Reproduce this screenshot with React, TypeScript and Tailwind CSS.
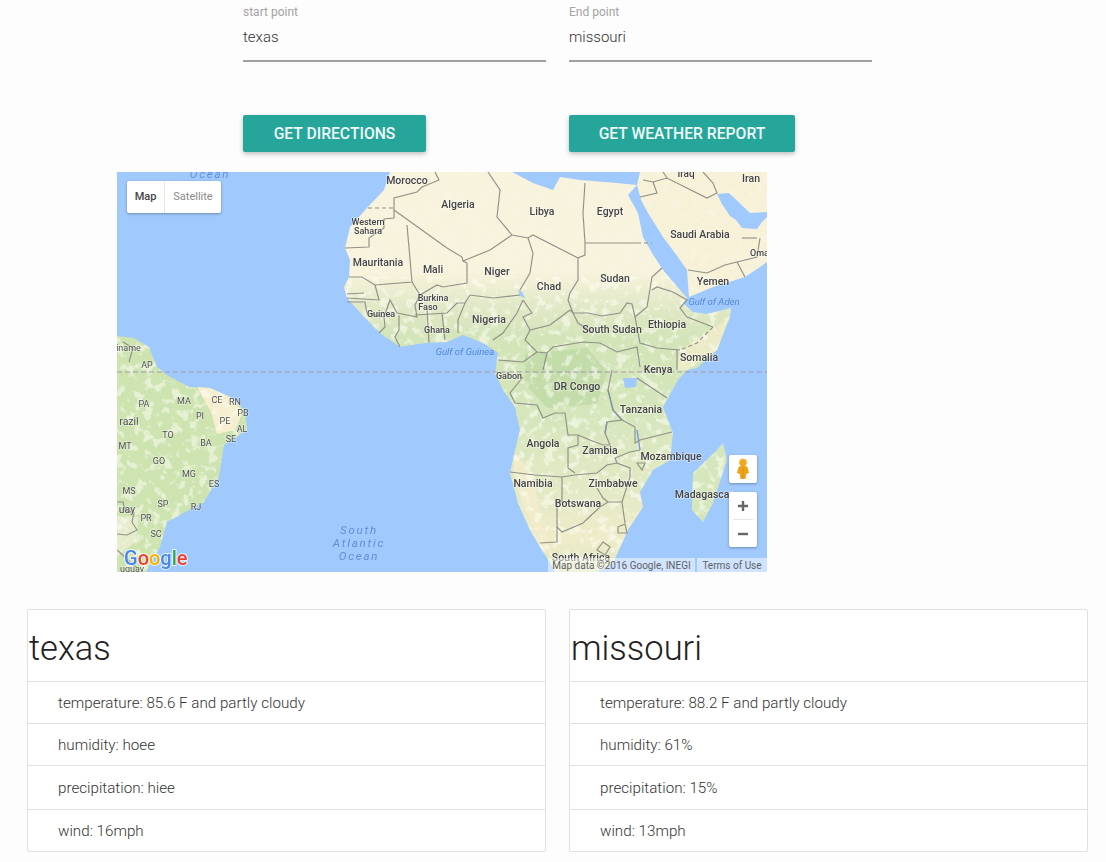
import React from 'react';

const FONT = "font-['Roboto','Liberation_Sans',sans-serif]";

type Place = [string, number, number, number?];

const AFRICA =
    'M273 0 L267 18 L250 36 L233 55 L228 76 L233 88 L232 105 L227 115 L230 126 L238 135 L250 148 L263 161 L283 175 L308 171 L330 170 L346 163 L366 171 L381 181 L378 201 L386 218 L398 235 L403 258 L398 278 L393 301 L401 331 L413 358 L423 375 L433 391 L438 400 L480 400 L496 391 L511 358 L526 335 L523 320 L536 298 L553 288 L556 261 L546 235 L561 208 L570 198 L580 196 L600 178 L613 145 L614 136 L590 142 L576 140 L566 131 L570 126 L546 98 L535 81 L526 65 L521 41 L511 23 L520 13 L500 11 L463 8 L443 5 L436 18 L416 11 L395 0 Z';
const ARABIA =
    'M523 0 L520 13 L524 28 L531 41 L546 65 L558 81 L570 98 L572 125 L596 115 L628 105 L643 95 L650 90 L650 0 Z';
const MADAGASCAR = 'M606 271 L610 288 L596 331 L586 350 L575 338 L576 301 L600 278 Z';
const BRAZIL =
    'M0 164 L17 166 L32 175 L40 195 L50 203 L72 215 L93 216 L113 225 L128 238 L130 258 L107 273 L102 305 L87 330 L50 350 L43 375 L30 398 L30 400 L0 400 Z';

const countries: Place[] = [
    ['Morocco', 290, 12, 10.5],
    ['Algeria', 341, 36, 10.5],
    ['Libya', 425, 43, 10.5],
    ['Egypt', 493, 43, 10.5],
    ['Iraq', 569, 5, 10],
    ['Iran', 634, 10, 10.5],
    ['Saudi Arabia', 583, 66, 10.5],
    ['Oman', 645, 84, 9],
    ['Western', 251, 53, 9],
    ['Sahara', 251, 62, 9],
    ['Mauritania', 261, 94, 10.5],
    ['Mali', 316, 101, 10.5],
    ['Niger', 380, 103, 10.5],
    ['Chad', 432, 118, 10.5],
    ['Sudan', 498, 110, 10.5],
    ['Yemen', 596, 113, 10.5],
    ['Burkina', 316, 129, 9],
    ['Faso', 311, 138, 9],
    ['Guinea', 264, 145, 9],
    ['Ghana', 320, 161, 9],
    ['Nigeria', 372, 151, 10.5],
    ['South Sudan', 495, 161, 10.5],
    ['Ethiopia', 550, 156, 10.5],
    ['Somalia', 582, 189, 10.5],
    ['Kenya', 541, 201, 10.5],
    ['Gabon', 392, 207, 9],
    ['DR Congo', 460, 218, 10.5],
    ['Tanzania', 524, 241, 10.5],
    ['Angola', 426, 275, 10.5],
    ['Zambia', 483, 282, 10.5],
    ['Mozambique', 554, 288, 10.5],
    ['Namibia', 416, 315, 10.5],
    ['Zimbabwe', 496, 315, 10.5],
    ['Madagascar', 587, 326, 10.5],
    ['Botswana', 461, 335, 10.5],
    ['South Africa', 464, 389, 10.5],
];

const brazil: Place[] = [
    ['riname', 10, 179, 9],
    ['AP', 30, 196, 9],
    ['PA', 27, 235, 9],
    ['MA', 67, 232, 9],
    ['CE', 100, 231, 9],
    ['RN', 118, 233, 9],
    ['PB', 126, 244, 9],
    ['PI', 83, 247, 9],
    ['PE', 108, 252, 9],
    ['AL', 125, 260, 9],
    ['razil', 12, 253, 10.5],
    ['TO', 51, 266, 9],
    ['BA', 89, 274, 9],
    ['SE', 114, 270, 9],
    ['MT', 8, 277, 9],
    ['GO', 42, 292, 9],
    ['MG', 72, 305, 9],
    ['ES', 97, 315, 9],
    ['MS', 12, 322, 9],
    ['SP', 46, 335, 9],
    ['RJ', 79, 338, 9],
    ['uay', 10, 341, 10.5],
    ['PR', 29, 349, 9],
    ['SC', 39, 365, 9],
    ['uguay', 15, 400, 9],
];

const borders = [
    // north west
    'M277 36 L277 46 L267 47 L267 56 L252 66 L252 75 L228 76',
    'M277 36 L277 26 L300 20 L305 15 L322 8 L318 0',
    'M277 38 L330 76 L345 85 L346 89 L373 78 L395 63',
    'M290 53 L295 110 L258 113 L245 105 L232 105',
    'M258 113 L262 128 L230 126',
    'M230 122 L247 121',
    'M230 130 L248 130 L250 141 L267 145 L273 128 L280 141 L300 145 L298 133 L303 123 L320 113 L326 115 L350 111 L350 91 L346 89',
    'M267 145 L268 155 L262 161',
    'M282 143 L282 158 L278 165 L283 175',
    'M295 110 L303 123',
    'M298 143 L330 141 L340 131 L348 131 L353 123 L376 126 L403 123',
    'M310 136 L312 171',
    'M325 141 L328 168',
    'M348 131 L341 148 L341 161',
    // sahara
    'M371 0 L383 18 L380 45 L395 63 L411 66 L416 63 L461 86',
    'M468 11 L466 41 L468 71 L468 83 L461 86 L461 108 L453 121 L451 128 L456 141 L461 151 L476 161',
    'M468 71 L520 71',
    'M411 66 L416 81 L413 101 L403 118',
    // central belt
    'M406 128 L415 141 L406 145 L413 158 L433 153 L453 138 L456 141 L471 141 L485 144 L503 141 L510 131 L515 132 L518 145 L530 135 L535 105 L545 96',
    'M376 168 L386 161 L400 141 L406 128',
    'M413 158 L408 168 L420 180 L430 181 L436 175 L466 170 L483 171 L500 180 L520 175 L523 195',
    'M381 188 L406 190 L420 180',
    'M426 198 L430 181',
    'M535 118 L540 115 L556 120 L570 128 L563 136 L570 145 L596 155',
    'M563 178 L540 176 L523 171 L518 145',
    'M560 178 L560 198',
    // equatorial and south
    'M406 205 L393 221 L398 231 L420 233 L426 246 L438 241 L448 241 L451 263 L461 263 L461 273 L451 276 L451 296 L458 301',
    'M495 198 L493 208 L491 218 L496 238 L505 248 L490 250 L488 261 L493 273 L486 273 L473 268 L461 263',
    'M520 206 L550 226',
    'M505 248 L518 255 L518 271 L523 268 L555 260',
    'M523 278 L513 280 L498 286 L500 291 L513 296 L513 305 L505 330 L508 351',
    'M520 291 L528 291 L525 298 Z',
    'M500 291 L490 293 L480 301 L458 303 L445 305 L418 303 L393 300',
    'M445 305 L445 330 L440 330 L440 370 L423 371',
    'M440 355 L445 360 L466 351 L483 335 L491 330 L505 330',
    'M480 316 L486 326 L491 330',
    'M501 355 L508 352 L510 361 L501 361 Z',
    'M480 378 L486 370 L493 375 L488 383 Z',
    // arabia
    'M571 98 L590 101 L608 93 L620 90 L640 85 L643 66',
    'M620 90 L628 105',
    'M625 66 L640 66',
    'M526 8 L536 10 L550 6 L590 26 L600 21 L596 11 L586 0',
    'M523 25 L540 21 L536 10',
    'M546 0 L550 6',
    // south america
    'M6 170 L16 176 L12 190',
    'M0 330 L6 330 L8 338 L17 341 L15 350 L20 358 L10 363 L0 362',
    'M0 378 L20 396',
];

const App: React.FC = () => {
    return (
        <div className={`h-[862px] overflow-hidden bg-[#fdfdfd] ${FONT}`}>
            {/* route form */}
            <div className="flex gap-[23px] pl-[243px]">
                <Field label="start point" value="texas" />
                <Field label="End point" value="missouri" />
            </div>
            <div className="mt-[53px] flex pl-[243px]">
                <ActionButton className="w-[183px]" text="GET DIRECTIONS" />
                <ActionButton className="ml-[143px] w-[226px]" text="GET WEATHER REPORT" />
            </div>

            <div className="relative ml-[117px] mt-5 h-[400px] w-[650px] overflow-hidden bg-[#a0c9fe]">
                <MapDrawing />
                <div className="absolute left-[10px] top-[9px] flex h-[32px] w-[94px] rounded-[2px] bg-white text-[11px] shadow-[0_1px_3px_rgba(0,0,0,0.3)]">
                    <span className="flex w-[38px] items-center justify-center border-r border-[#e6e6e6] font-medium text-[#444]">Map</span>
                    <span className="flex flex-1 items-center justify-center text-[#8a8a8a]">Satellite</span>
                </div>
                <div className="absolute right-[10px] top-[283px] flex h-[28px] w-[28px] items-center justify-center rounded-[2px] bg-white shadow-[0_1px_3px_rgba(0,0,0,0.3)]">
                    <svg width="14" height="22" viewBox="0 0 14 22">
                        <circle cx="7" cy="4.5" r="3.8" fill="#f2a81f" />
                        <path d="M2.5 9 Q7 6.5 11.5 9 L13 15 L10.2 16 L9.5 21 L4.5 21 L3.8 16 L1 15 Z" fill="#eda31c" />
                        <path d="M7 10 L7 21" stroke="#d98e10" strokeWidth="1" />
                    </svg>
                </div>
                <div className="absolute right-[10px] top-[320px] flex h-[55px] w-[28px] flex-col items-center rounded-[2px] bg-white shadow-[0_1px_3px_rgba(0,0,0,0.3)]">
                    <svg width="12" height="27" viewBox="0 0 12 27">
                        <path d="M1 14 H11 M6 9 V19" stroke="#666" strokeWidth="2.4" />
                    </svg>
                    <div className="h-px w-[20px] bg-[#e6e6e6]" />
                    <svg width="12" height="27" viewBox="0 0 12 27">
                        <path d="M1 14 H11" stroke="#666" strokeWidth="2.4" />
                    </svg>
                </div>
                <div className="absolute bottom-0 right-0 flex h-[14px] items-center text-[10px] text-[#5f5f5f]">
                    <span className="flex h-full w-[147px] items-center justify-center bg-white/50">Map data ©2016 Google, INEGI</span>
                    <span className="ml-[2px] flex h-full w-[70px] items-center justify-center bg-white/50">Terms of Use</span>
                </div>
            </div>

            <div className="mt-[37px] flex gap-[23px] pl-[27px]">
                <WeatherCard className="w-[519px]" city="texas" temperature="85.6 F and partly cloudy" humidity="hoee" precipitation="hiee" wind="16mph" />
                <WeatherCard className="w-[519px]" city="missouri" temperature="88.2 F and partly cloudy" humidity="61%" precipitation="15%" wind="13mph" />
            </div>
        </div>
    );
};

const Field: React.FC<{ label: string; value: string }> = ({ label, value }) => (
    <div className="h-[62px] w-[303px] border-b-2 border-[#a0a0a0]">
        <div className="pt-[5px] text-[12px] leading-[14px] text-[#a3a3a3]">{label}</div>
        <div className="mt-[8px] text-[15px] font-light leading-5 text-[#333]">{value}</div>
    </div>
);

const ActionButton: React.FC<{ text: string; className: string }> = ({ text, className }) => (
    <button className={`flex h-[37px] items-center justify-center rounded-[2px] bg-[#26a69a] text-[15.7px] font-medium text-[#eef8f7] shadow-[0_2px_5px_rgba(0,0,0,0.26)] ${className}`}>
        {text}
    </button>
);

interface WeatherCardProps {
    city: string;
    temperature: string;
    humidity: string;
    precipitation: string;
    wind: string;
    className: string;
}

const WeatherCard: React.FC<WeatherCardProps> = ({ city, temperature, humidity, precipitation, wind, className }) => (
    <div className={`h-[243px] rounded-[2px] border border-[#e0e0e0] bg-white ${className}`}>
        <div className="flex h-[71px] items-center pl-px pt-[6px] text-[34.5px] font-light text-[#222]">{city}</div>
        <div className="flex h-[42px] items-center border-t border-[#e0e0e0] pl-[30px] pt-px text-[15.2px] font-light text-[#333]">temperature: {temperature}</div>
        <div className="flex h-[42px] items-center border-t border-[#e0e0e0] pl-[30px] pt-px text-[15.2px] font-light text-[#333]">humidity: {humidity}</div>
        <div className="flex h-[44px] items-center border-t border-[#e0e0e0] pl-[30px] pt-px text-[15.2px] font-light text-[#333]">precipitation: {precipitation}</div>
        <div className="flex h-[42px] items-center border-t border-[#e0e0e0] pl-[30px] pt-px text-[15.2px] font-light text-[#333]">wind: {wind}</div>
    </div>
);

const MapDrawing: React.FC = () => (
    <svg width="650" height="400" viewBox="0 0 650 400" className="block blur-[0.35px]">
        <defs>
            <linearGradient id="africa" gradientUnits="userSpaceOnUse" x1="0" y1="0" x2="0" y2="400">
                <stop offset="0" stopColor="#f8f3dc" />
                <stop offset="0.25" stopColor="#f8f3dc" />
                <stop offset="0.33" stopColor="#e2e9c8" />
                <stop offset="0.42" stopColor="#d2e4b8" />
                <stop offset="0.62" stopColor="#d6e6bc" />
                <stop offset="0.78" stopColor="#e2e9c4" />
                <stop offset="0.92" stopColor="#efecca" />
                <stop offset="1" stopColor="#dbe6bc" />
            </linearGradient>
            <filter id="mottle" x="0" y="0" width="100%" height="100%">
                <feTurbulence type="fractalNoise" baseFrequency="0.11" numOctaves="3" seed="7" />
                <feColorMatrix values="0 0 0 0 1  0 0 0 0 1  0 0 0 0 0.92  7 0 0 0 -3.7" />
            </filter>
            <clipPath id="land">
                <path d={AFRICA} />
                <path d={ARABIA} />
                <path d={MADAGASCAR} />
                <path d={BRAZIL} />
            </clipPath>
        </defs>

        {/* land */}
        <path fill="url(#africa)" d={AFRICA} />
        <path fill="#f7f1d8" d={ARABIA} />
        <path fill="#d6e6bc" d={MADAGASCAR} />
        <path fill="#cde3b0" d={BRAZIL} />
        <path fill="#f5efd0" d="M80 215 L93 216 L113 225 L126 240 L118 258 L100 262 L94 240 Z" />
        <path fill="#eef0d8" opacity="0.75" d="M0 344 L22 345 L18 370 L0 385 Z" />
        <path fill="#bedaa6" opacity="0.8" d="M408 182 L470 176 L490 200 L480 232 L430 236 L408 212 Z" />
        <path fill="#f3eccb" opacity="0.85" d="M398 282 L415 300 L425 350 L436 385 L425 372 L405 330 L396 300 Z" />
        <path fill="#f3eccb" opacity="0.8" d="M563 178 L596 157 L612 146 L600 178 L570 198 L560 198 Z" />
        <g clipPath="url(#land)">
            <rect y="105" width="650" height="295" filter="url(#mottle)" opacity="0.5" />
            <rect width="650" height="105" filter="url(#mottle)" opacity="0.14" />
        </g>

        {/* water on top of the land */}
        <path fill="#a0c9fe" d="M600 22 L612 21 L633 41 L650 40 L650 45 L645 50 L640 57 L625 56 L619 48 L613 44 L605 32 Z" />
        <path fill="#a0c9fe" d="M506 206 L520 206 L519 215 L508 216 Z" />
        <path fill="#a0c9fe" d="M401 117 L405 120 L408 126 L403 124 Z" />
        <path d="M491 218 L496 238 L505 248 M490 250 L488 261 M520 258 L523 278" fill="none" stroke="#6f9ee0" strokeWidth="1.4" />

        {/* borders */}
        {borders.map((d) => (
            <path key={d} d={d} fill="none" stroke="#919188" strokeWidth="1.15" />
        ))}
        <g fill="none" stroke="#919188" strokeWidth="1.15" strokeDasharray="4 3">
            <path d="M251 36 L277 36" />
            <path d="M520 71 L535 71" />
            <path d="M596 155 L580 171 L563 178" />
        </g>
        <path d="M0 200 H650" fill="none" stroke="#a39aa9" strokeWidth="1.2" strokeDasharray="5 3" />

        {/* labels */}
        {countries.map(([name, x, y, size]) => (
            <text key={name + x} x={x} y={y} textAnchor="middle" fontSize={size} fontWeight="500" fill="#444" stroke="#ffffff" strokeOpacity="0.45" strokeWidth="1.5" paintOrder="stroke">
                {name}
            </text>
        ))}
        {brazil.map(([name, x, y, size]) => (
            <text key={name + x} x={x} y={y} textAnchor="middle" fontSize={size} fill="#505050" stroke="#ffffff" strokeOpacity="0.4" strokeWidth="1.5" paintOrder="stroke">
                {name}
            </text>
        ))}
        <g fill="#5487d6" fontSize="9.5" fontStyle="italic" textAnchor="middle">
            <text x="348" y="183">Gulf of Guinea</text>
            <text x="597" y="133">Gulf of Aden</text>
        </g>
        <g fill="#5f8fd8" fontSize="11.5" fontStyle="italic" textAnchor="middle" letterSpacing="1.8">
            <text x="93" y="6">Ocean</text>
            <text x="242" y="362">South</text>
            <text x="242" y="375">Atlantic</text>
            <text x="242" y="388">Ocean</text>
        </g>

        {/* google logo */}
        <text x="7" y="393" fontSize="20" fontWeight="500" stroke="#ffffff" strokeOpacity="0.7" strokeWidth="2" paintOrder="stroke">
            <tspan fill="#4a86e8">G</tspan>
            <tspan fill="#e94235">o</tspan>
            <tspan fill="#f5b400">o</tspan>
            <tspan fill="#4a86e8">g</tspan>
            <tspan fill="#34a853">l</tspan>
            <tspan fill="#e94235">e</tspan>
        </text>
    </svg>
);

export default App;
